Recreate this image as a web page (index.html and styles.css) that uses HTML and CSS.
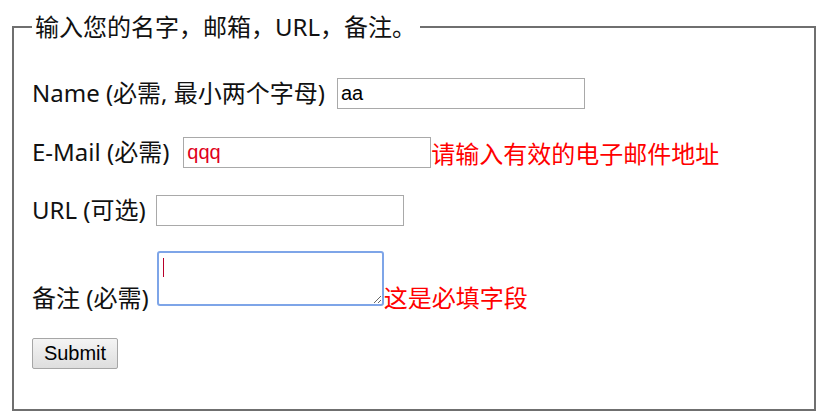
FILE: index.html
```html
<!DOCTYPE html>
<html lang="zh-CN">
<head>
<meta charset="utf-8">
<title>Form</title>
<link rel="stylesheet" href="styles.css">
</head>
<body>
<fieldset class="box">
  <legend class="box-title">输入您的名字，邮箱，URL，备注。</legend>
  <form class="form">
    <div class="row row-1">
      <label class="lbl" for="name">Name (必需, 最小两个字母)</label>
      <input class="field" id="name" type="text" value="aa">
    </div>
    <div class="row row-2">
      <label class="lbl" for="email">E-Mail (必需)</label>
      <input class="field field-bad" id="email" type="text" value="qqq">
      <span class="err">请输入有效的电子邮件地址</span>
    </div>
    <div class="row row-3">
      <label class="lbl" for="url">URL (可选)</label>
      <input class="field" id="url" type="text" value="">
    </div>
    <div class="row row-4">
      <label class="lbl lbl-low" for="note">备注 (必需)</label>
      <span class="ta-wrap"><textarea class="area" id="note"></textarea></span>
      <span class="err lbl-low">这是必填字段</span>
    </div>
    <div class="row row-5">
      <button class="btn" type="button">Submit</button>
    </div>
  </form>
</fieldset>
</body>
</html>
```

FILE: styles.css
```css
html, body {
  background: #ffffff;
}
body {
  margin: 12px 14px 8px 12px;
  font-family: "Noto Sans", "Noto Sans CJK SC", sans-serif;
  font-size: 24px;
  color: #111;
}
.box {
  margin: 0;
  padding: 0 18px 40px 18px;
  border: 2px solid #6f6f6f;
  box-shadow: 1px 1px 0 #dcdcdc;
  min-width: 0;
}
.box-title {
  padding: 0 4px 0 3px;
  line-height: 30px;
  font-size: 24px;
  color: #111;
}
.form {
  margin: 0;
  display: flex;
  flex-direction: column;
}
.row {
  display: flex;
  align-items: center;
  gap: 12px;
  height: 31px;
}
.row-1 { margin-top: 36px; }
.row-2 { margin-top: 27.5px; gap: 14px; }
.row-3 { margin-top: 27.5px; gap: 10px; }
.row-4 {
  margin-top: 24.5px;
  height: 55.5px;
  align-items: flex-end;
  gap: 8px;
}
.row-5 { margin-top: 32px; }
.lbl {
  line-height: 31px;
  white-space: nowrap;
  margin-bottom: 2px;
}
.lbl-low {
  line-height: 24px;
  margin-bottom: -4px;
}
.field {
  box-sizing: border-box;
  width: 248px;
  height: 31px;
  margin: 0;
  padding: 1px 3px;
  border: 1px solid #a9a9a9;
  border-radius: 0;
  font-family: Arial, "Liberation Sans", sans-serif;
  font-size: 20px;
  color: #000;
  background: #fff;
  outline: none;
}
.field-bad {
  color: #e0001b;
}
.err {
  color: #ff0000;
  white-space: nowrap;
}
.row-2 .err { margin-left: -14px; }
.row-4 .err { margin-left: -8px; }
.ta-wrap {
  position: relative;
  display: block;
  height: 55.5px;
}
.ta-wrap::after {
  content: "";
  position: absolute;
  left: 6px;
  top: 7px;
  width: 1px;
  height: 19px;
  background: #b8002a;
}
.area {
  box-sizing: border-box;
  display: block;
  width: 227px;
  height: 55.5px;
  margin: 0;
  padding: 2px;
  border: 2px solid #7ea5e8;
  border-radius: 3px;
  background: #fff;
  outline: none;
  font-family: Arial, "Liberation Sans", sans-serif;
  font-size: 20px;
}
.btn {
  box-sizing: border-box;
  width: 86px;
  height: 31px;
  margin: 0;
  padding: 0;
  border: 1px solid #a6a6a6;
  border-radius: 2px;
  background: linear-gradient(#f4f4f4, #dedede);
  font-family: Arial, "Liberation Sans", sans-serif;
  font-size: 20px;
  color: #000;
}
```
